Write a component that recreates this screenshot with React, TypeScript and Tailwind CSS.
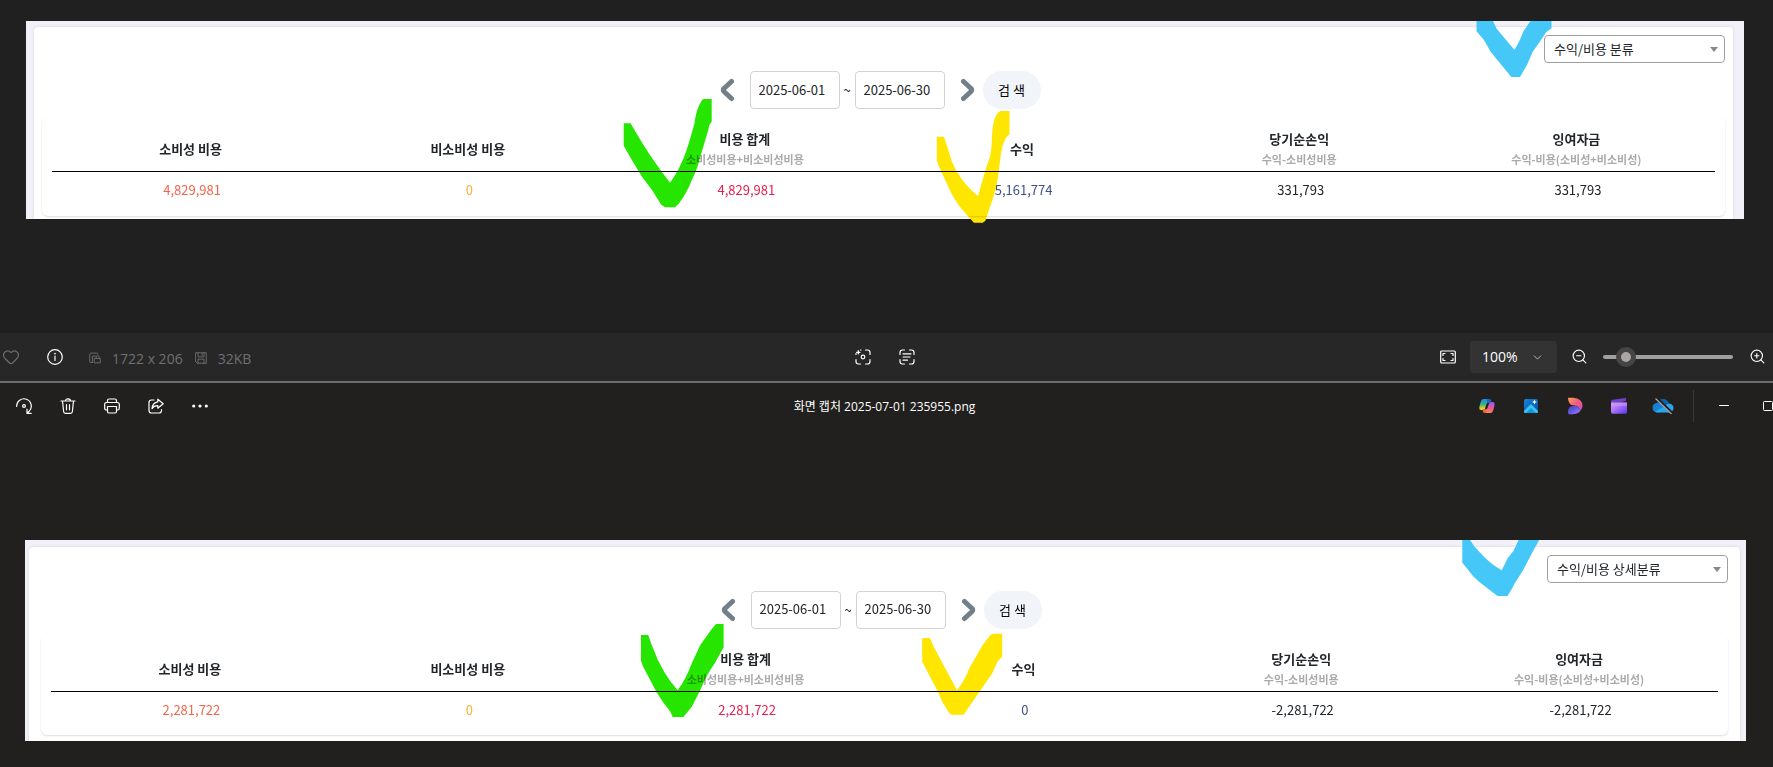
import type { ReactNode } from "react";
import { ChevronDown, Heart, ZoomIn, ZoomOut } from "lucide-react";

type Mark = { className: string; viewBox: string; color: string; d: string };

type Column = { title: string; note?: string; value: string; tone: string };

type Report = {
  id: string;
  category: string;
  panel: string;
  card: string;
  columns: Column[];
  marks: Mark[];
};

const makeColumns = (values: string[]): Column[] => [
  { title: "소비성 비용", value: values[0], tone: "text-[#f1654c]" },
  { title: "비소비성 비용", value: values[1], tone: "text-[#fbb03b]" },
  { title: "비용 합계", note: "소비성비용+비소비성비용", value: values[2], tone: "text-[#e8204e]" },
  { title: "수익", value: values[3], tone: "text-[#3f5185]" },
  { title: "당기순손익", note: "수익-소비성비용", value: values[4], tone: "text-[#212529]" },
  { title: "잉여자금", note: "수익-비용(소비성+비소비성)", value: values[5], tone: "text-[#212529]" },
];

const GREEN = "#26e600";
const YELLOW = "#ffe600";
const BLUE = "#45c8f7";

const first: Report = {
  id: "summary",
  category: "수익/비용 분류",
  panel: "ml-[26px] mr-[29px] pl-2 pr-[11px] pt-[6px] pb-0",
  card: "px-2 pb-[3px]",
  columns: makeColumns(["4,829,981", "0", "4,829,981", "5,161,774", "331,793", "331,793"]),
  marks: [
    {
      className: "absolute z-20 mix-blend-multiply left-[calc(50%-262px)] top-[77px] w-[90px] h-[111px]",
      viewBox: "623 98 90 111",
      color: GREEN,
      d: "M623.7 123.3H630.6L636.4 133.3Q650 157 670 182.7Q680 169 686 151.7Q690 140 694.5 123.3C696 113 698 107 700.3 103.3Q702 99 704 99H711.7V121.7Q709 124 708.3 130L700.3 156.7Q697 170 691.8 180Q687 193 678.5 204L675 207.3H665L661.2 204.7Q653 190 642 176.7L633 162L623.7 145.7Z",
    },
    {
      className: "absolute z-0 left-[calc(50%+51px)] top-[89px] w-[75px] h-[114px]",
      viewBox: "936 110 75 114",
      color: YELLOW,
      d: "M936.8 136.7H944L948.3 150Q951 161 955.9 170Q965 186 978.1 196Q982 182 986.5 166.7Q991 156 991.5 146.7C992 138 992 130 993.4 123.3Q995 116 998 112.7L1000 111H1009.5V134L1005.7 138.3Q1002 145 1001 153.3L998 176.7Q996 190 992.3 200L985.4 220.7L982.7 222.7H973.9L963.6 211.3Q954 200 948.3 186.7L940.6 170Q938 165 936.8 160Z",
    },
    {
      className: "absolute z-0 right-[192px] top-0 w-[76px] h-[56px]",
      viewBox: "1476 21 76 56",
      color: BLUE,
      d: "M1476.5 21H1493L1496.4 28.3Q1505 39 1514.4 49.7Q1519 43 1523.2 31.7L1530.4 21H1551.5V28.3L1546.1 32.3Q1540 42 1532.7 51.7L1527 65L1520 77H1511.3L1490.6 51.7L1484 40L1476.5 31.3Z",
    },
  ],
};

const second: Report = {
  id: "detail",
  category: "수익/비용 상세분류",
  panel: "ml-[25px] mr-[27px] pl-1 pr-[6px] pt-[7px] pb-0",
  card: "px-3 pb-[6px]",
  columns: makeColumns(["2,281,722", "0", "2,281,722", "0", "-2,281,722", "-2,281,722"]),
  marks: [
    {
      className: "absolute z-20 mix-blend-multiply left-[calc(50%-245px)] top-[83px] w-[83px] h-[95px]",
      viewBox: "641 623 83 95",
      color: GREEN,
      d: "M641 635H648.2L651.7 645Q657 660 665 673.3Q671 683 677.7 690.3Q686 679 691.8 663.3L700.3 645L711 630L716 624H723.6V647.3L714.8 663.3Q707 674 700.3 690L691.8 706.7L683.4 717H672.7L670.4 711.7Q663 703 656.3 691.7L643.2 666.7L641 661Z",
    },
    {
      className: "absolute z-0 left-[calc(50%+36px)] top-[93px] w-[81px] h-[83px]",
      viewBox: "922 633 81 83",
      color: YELLOW,
      d: "M922.2 638H929.9L933.7 646.7L957 690.3Q965 680 969.3 668.3L982.7 645L990.4 635L993.4 633.7H1002.2V656.7L998 660.7L992.3 673.3L963.6 714.7H951.3L948.3 711.7Q942 703 937.9 691.7L923.4 664L922.2 661.7Z",
    },
    {
      className: "absolute z-0 right-[206px] top-0 w-[78px] h-[57px]",
      viewBox: "1462 540 78 57",
      color: BLUE,
      d: "M1462.3 540H1470Q1474 547 1479.2 551.7Q1489 563 1501.7 570.3L1507.9 557.7L1513.6 550.7L1518.6 540H1539.2L1532.7 551.7L1523.2 570L1514.8 583.3Q1511 591 1507.5 596H1497.5L1479 581.7Q1472 576 1467.7 569.3L1462.3 562.7Z",
    },
  ],
};

function Arrow({ flip, label }: { flip?: boolean; label: string }) {
  return (
    <button type="button" aria-label={label} className="flex h-[38px] w-[14px] items-center">
      <svg viewBox="0 0 14 24" className="h-6 w-[14px]" fill="none" stroke="#737f88" strokeWidth="5" strokeLinecap="round" strokeLinejoin="round">
        <path d={flip ? "M2.5 3.5L9.5 10Q12 12 9.5 14L2.5 20.5" : "M11.5 3.5L4.5 10Q2 12 4.5 14L11.5 20.5"} />
      </svg>
    </button>
  );
}

function DateBox({ label, value }: { label: string; value: string }) {
  return (
    <input
      type="text"
      aria-label={label}
      defaultValue={value}
      className="h-[38px] w-[90px] rounded border border-[#ced4da] bg-white px-2 pb-[2px] text-[13px] text-[#212529]"
    />
  );
}

function ReportPanel({ report }: { report: Report }) {
  return (
    <section
      className={`relative isolate bg-[#f2f1f9] font-['Noto_Sans_CJK_KR',sans-serif] text-[13px] text-[#212529] ${report.panel}`}
    >
      <div className={`rounded-t bg-white pt-2 shadow-[0_0_3px_rgba(0,0,0,0.12)] ${report.card}`}>
        <div className="flex justify-end">
          <div className="relative z-10 w-[181px]">
            <select
              aria-label="분류"
              className="block h-7 w-full appearance-none rounded border border-[#a0a0a0] bg-transparent pl-[9px] pr-6"
            >
              <option>{report.category}</option>
            </select>
            <svg viewBox="0 0 8 5" className="pointer-events-none absolute right-[7px] top-3 h-[5px] w-2" fill="#888">
              <path d="M0 0H8L4 5Z" />
            </svg>
          </div>
        </div>
        <form className="mt-2 flex items-center justify-center" onSubmit={(e) => e.preventDefault()}>
          <Arrow label="이전 달" />
          <span className="w-4" />
          <DateBox label="시작일" value="2025-06-01" />
          <span className="w-[15px] text-center">~</span>
          <DateBox label="종료일" value="2025-06-30" />
          <span className="w-4" />
          <Arrow flip label="다음 달" />
          <button type="submit" className="ml-2 mr-[7px] h-[38px] w-[58px] rounded-full bg-[#f1f5f9] text-black">
            검 색
          </button>
        </form>
        <div className="relative z-10 mt-[7px] rounded-md px-[10px] pt-[13px] pb-[6px] shadow-[0_1px_2px_rgba(0,0,0,0.14)]">
          <table className="w-full table-fixed border-collapse text-center">
            <thead>
              <tr className="h-[42px] border-b border-black">
                {report.columns.map((c) => (
                  <th key={c.title} scope="col" className="px-0 pt-0 pb-[2px] align-middle leading-5 font-bold">
                    {c.title}
                    {c.note && <span className="block text-[11px] leading-5 text-[#aaa]">{c.note}</span>}
                  </th>
                ))}
              </tr>
            </thead>
            <tbody>
              <tr className="h-[38px]">
                {report.columns.map((c) => (
                  <td key={c.title} className={`pt-0 pb-[2px] pl-[3px] pr-0 ${c.tone}`}>
                    {c.value}
                  </td>
                ))}
              </tr>
            </tbody>
          </table>
        </div>
      </div>
      {report.marks.map((m) => (
        <svg key={m.viewBox} viewBox={m.viewBox} className={`pointer-events-none ${m.className}`} fill={m.color}>
          <path d={m.d} />
        </svg>
      ))}
    </section>
  );
}

function Tool({ label, children }: { label: string; children: ReactNode }) {
  return (
    <button type="button" aria-label={label} className="flex h-10 w-11 shrink-0 items-center justify-center">
      {children}
    </button>
  );
}

function Line({ children, className = "h-4 w-4" }: { children: ReactNode; className?: string }) {
  return (
    <svg viewBox="0 0 16 16" className={className} fill="none" stroke="currentColor" strokeWidth="1.2" strokeLinecap="round" strokeLinejoin="round">
      {children}
    </svg>
  );
}

function StatusBar() {
  return (
    <footer className="grid h-[50px] grid-cols-[1fr_auto_1fr] items-center border-b-2 border-[#6d6d6e] bg-[#272727] font-['Open_Sans',sans-serif] text-sm text-white">
      <div className="-ml-[11px] flex items-center text-[#707070]">
        <Tool label="즐겨찾기">
          <Heart size={18} strokeWidth={1.5} />
        </Tool>
        <span className="text-white">
          <Tool label="정보">
            <Line>
              <circle cx="8" cy="8" r="7.3" />
              <path d="M8 7V11.5" />
              <path d="M8 4.6V4.7" strokeWidth="1.6" />
            </Line>
          </Tool>
        </span>
        <Line className="ml-3 mt-[2px] h-3 w-3">
          <path d="M4.500 14H2.500Q1 14 1 12.500V3Q1 1.500 2.500 1.500H10.500Q12 1.500 12 3M4.500 14V5.500H8.500M7.500 8.500H15V14.500H7.500ZM9.500 8.500V6.500Q9.500 5 11.500 5T13.500 6.500V8.500" />
        </Line>
        <span className="ml-[11px] mt-1">1722 x 206</span>
        <Line className="ml-3 mt-[2px] h-3 w-3">
          <path d="M1 1H15V15H3L1 13ZM4 1V6.500H12V1M9.500 2V4.500M4 15V9.500H12V15" />
        </Line>
        <span className="ml-[11px] mt-1">32KB</span>
      </div>
      <div className="mr-1 flex items-center">
        <Tool label="시각적 검색">
          <Line>
            <path d="M1 5.500V4.500M5.500 1H6M10.500 1H12.500Q15 1 15 3.500V5.500M15 10.500V12.500Q15 15 12.500 15H10.500M5.500 15H3.500Q1 15 1 12.500V10.500M3.300 1.600V5M1.600 3.300H5" />
            <circle cx="8" cy="8" r="1.800" />
          </Line>
        </Tool>
        <Tool label="텍스트 스캔">
          <Line>
            <path d="M1 5.500V3.500Q1 1 3.500 1H5.500M10.500 1H12.500Q15 1 15 3.500V5.500M15 10.500V12.500Q15 15 12.500 15H10.500M5.500 15H3.500Q1 15 1 12.500V10.500M4 4.800H12M4 8H11M4 11.200H8.500" />
          </Line>
        </Tool>
      </div>
      <div className="-mr-[6px] flex items-center justify-end">
        <Tool label="창에 맞춤">
          <Line>
            <rect x="0.700" y="2" width="14.600" height="12" rx="1" />
            <path d="M3 6.500V4.500H5M11 4.500H13V6.500M13 9.500V11.500H11M5 11.500H3V9.500" />
          </Line>
        </Tool>
        <div className="relative w-[87px]">
          <select aria-label="확대 비율" className="block h-8 w-full appearance-none rounded bg-[#333] pl-3 text-sm">
            <option>100%</option>
          </select>
          <ChevronDown size={13} strokeWidth={1.6} className="pointer-events-none absolute right-[13px] top-[10px] text-[#c8c8c8]" />
        </div>
        <Tool label="축소">
          <ZoomOut size={17} strokeWidth={1.6} />
        </Tool>
        <input
          type="range"
          aria-label="확대/축소"
          min={0}
          max={100}
          defaultValue={12}
          className="mx-[2px] h-1 w-[130px] appearance-none rounded-full bg-[#a19f9d] [&::-webkit-slider-thumb]:h-5 [&::-webkit-slider-thumb]:w-5 [&::-webkit-slider-thumb]:appearance-none [&::-webkit-slider-thumb]:rounded-full [&::-webkit-slider-thumb]:border-5 [&::-webkit-slider-thumb]:border-solid [&::-webkit-slider-thumb]:border-[#454545] [&::-webkit-slider-thumb]:bg-[#aaa6a2]"
        />
        <Tool label="확대">
          <ZoomIn size={17} strokeWidth={1.6} />
        </Tool>
      </div>
    </footer>
  );
}

function AppIcons() {
  return (
    <>
      <Tool label="Copilot">
        <svg viewBox="0 0 16 16" className="h-4 w-4">
          <defs>
            <linearGradient id="cpL" x1="0" y1="0" x2="0" y2="1">
              <stop offset="0" stopColor="#1b8bea" />
              <stop offset="0.500" stopColor="#35b77c" />
              <stop offset="0.850" stopColor="#e8d020" />
            </linearGradient>
            <linearGradient id="cpR" x1="0.600" y1="0" x2="0.200" y2="1">
              <stop offset="0" stopColor="#a455e8" />
              <stop offset="0.500" stopColor="#ee5a8d" />
              <stop offset="1" stopColor="#ff9a3c" />
            </linearGradient>
          </defs>
          <path d="M4.500 1H10Q11.500 1 12 3L12.500 4.500H9.500Q8 4.500 7.500 6L6 10.500Q5.500 12 4 12H2Q0 12 .3 9.500Q1 6 2 3Q2.700 1 4.500 1Z" fill="url(#cpL)" />
          <path d="M11.500 15H6Q4.500 15 4 13L3.500 11.500H6.500Q8 11.500 8.500 10L10 5.500Q10.500 4 12 4H14Q16 4 15.700 6.500Q15 10 14 13Q13.300 15 11.500 15Z" fill="url(#cpR)" />
          <path d="M8 1H10Q11.500 1 12 3L12.500 4.500H9.500Q8.500 4.500 8 5.500Z" fill="#1b5fd0" />
          <path d="M3.500 11.500H6.500Q7.500 11.500 8 10.500L7.500 15H6Q4.500 15 4 13Z" fill="#f4633a" />
        </svg>
      </Tool>
      <Tool label="편집">
        <svg viewBox="0 0 16 16" className="h-4 w-4">
          <defs>
            <linearGradient id="ph" x1="0" y1="0" x2="1" y2="1">
              <stop offset="0" stopColor="#1683d8" />
              <stop offset="1" stopColor="#0b4f9e" />
            </linearGradient>
          </defs>
          <rect x="1" y="1" width="14" height="14" rx="1.500" fill="url(#ph)" />
          <path d="M1 13L7.200 6.800Q8 6 8.800 6.800L15 13V13.500Q15 15 13.500 15H2.500Q1 15 1 13.500Z" fill="#38c5f2" />
          <path d="M3 15L8 10L13 15Z" fill="#1593df" />
          <path d="M11.500 1.500L12.200 3.300L14 4L12.200 4.700L11.500 6.500L10.800 4.700L9 4L10.800 3.300Z" fill="#fff" />
        </svg>
      </Tool>
      <Tool label="디자이너">
        <svg viewBox="0 0 16 18" className="h-[18px] w-4">
          <defs>
            <linearGradient id="dsA" x1="0" y1="0" x2="1" y2="0.800">
              <stop offset="0" stopColor="#ffa353" />
              <stop offset="0.500" stopColor="#f3627a" />
              <stop offset="1" stopColor="#d84bb5" />
            </linearGradient>
            <linearGradient id="dsB" x1="0" y1="0" x2="1" y2="1">
              <stop offset="0" stopColor="#4b3bb5" />
              <stop offset="0.600" stopColor="#6c62ef" />
              <stop offset="1" stopColor="#b58cf5" />
            </linearGradient>
          </defs>
          <path d="M1 .8H6Q15.500 1.500 15.500 9Q15.500 11.500 13.500 13.500Q12 9 7.500 8.500Q4 8.300 3 7Q1 4.500 1 .8Z" fill="url(#dsA)" />
          <path d="M1 15Q1 9 6.500 8.800Q12 9 13.500 13.500Q11 17.300 5 17.300H2.500Q1 17.300 1 15Z" fill="url(#dsB)" />
        </svg>
      </Tool>
      <Tool label="Clipchamp">
        <svg viewBox="0 0 16 16" className="h-4 w-4">
          <defs>
            <linearGradient id="cc" x1="0" y1="0" x2="1" y2="1">
              <stop offset="0" stopColor="#e3a4ff" />
              <stop offset="0.500" stopColor="#a36bf5" />
              <stop offset="1" stopColor="#5938ee" />
            </linearGradient>
          </defs>
          <path d="M0 4V3.500Q0 2 1.500 1.800L15 0V3L8 4.500Z" fill="#6d44c9" />
          <path d="M0 4.500H16V14Q16 15.700 14.500 15.700H1.500Q0 15.700 0 14Z" fill="url(#cc)" />
          <path d="M0 4.500H16V8H0Z" fill="#c993ff" opacity="0.600" />
        </svg>
      </Tool>
      <Tool label="OneDrive">
        <svg viewBox="0 0 22 16" className="h-4 w-[22px]">
          <path d="M5 5Q7 1 11 1Q15.500 1 17 5.500L11 10L4 6Z" fill="#0d62ae" />
          <path d="M5 5Q8.500 4.500 11 7L17 13L5 14.500Q.5 14 .5 9.800T5 5Z" fill="#1583d2" />
          <path d="M3 13.500L13 8Q15 5.500 17 5.500Q21.500 6 21.500 10Q21 14.500 17 14.500H5.500Q4 14.500 3 13.500Z" fill="#28a5ee" />
          <path d="M4.500 0L21 16" stroke="#21201e" strokeWidth="3" />
          <path d="M3.500 .5L19.500 16" stroke="#aaa" strokeWidth="1.200" />
        </svg>
      </Tool>
    </>
  );
}

function TitleBar() {
  return (
    <header className="grid h-[47px] grid-cols-[1fr_auto_1fr] items-center text-white">
      <div className="ml-[2px] flex items-center">
        <Tool label="회전">
          <Line>
            <path d="M.7 8.500A7.300 7.300 0 1 1 13.200 13.200L11 15.300M11 11.200V15.400H15.200" />
            <circle cx="8" cy="8" r="1.400" />
          </Line>
        </Tool>
        <Tool label="삭제">
          <Line>
            <path d="M1 3H15M5.500 3Q5.500 .8 8 .8T10.500 3M2.500 3L3.600 13.500Q3.800 15.300 5.500 15.300H10.500Q12.200 15.300 12.400 13.500L13.500 3M6.500 6.500V11.800M9.500 6.500V11.800" />
          </Line>
        </Tool>
        <Tool label="인쇄">
          <Line>
            <path d="M3.500 4.500V2.500Q3.500 1 5 1H11Q12.500 1 12.500 2.500V4.500M3.500 12H2.500Q.7 12 .7 10.200V6.500Q.7 4.500 2.700 4.500H13.300Q15.300 4.500 15.300 6.500V10.200Q15.300 12 13.500 12H12.500M3.500 8.500H12.500V13.500Q12.500 15 11 15H5Q3.500 15 3.500 13.500Z" />
          </Line>
        </Tool>
        <Tool label="공유">
          <Line>
            <path d="M6 2H3.500Q1 2 1 4.500V12.500Q1 15 3.500 15H11Q13.500 15 13.500 12.500V11.500M9.800 1.200L15.200 5.700L9.800 10.200V7.700Q6 7.500 4 10.700Q4.500 4.500 9.800 3.800Z" />
          </Line>
        </Tool>
        <Tool label="더 보기">
          <svg viewBox="0 0 16 4" className="h-1 w-4" fill="currentColor">
            <circle cx="1.700" cy="2" r="1.600" />
            <circle cx="8" cy="2" r="1.600" />
            <circle cx="14.300" cy="2" r="1.600" />
          </svg>
        </Tool>
      </div>
      <h1 className="mr-1 pt-[2px] font-['Open_Sans','Noto_Sans_CJK_KR',sans-serif] text-xs">화면 캡처 2025-07-01 235955.png</h1>
      <div className="-mr-[17px] flex items-center justify-end">
        <AppIcons />
        <span className="ml-2 mr-2 h-8 w-px bg-[#3a3938]" />
        <Tool label="최소화">
          <svg viewBox="0 0 10 10" className="h-[10px] w-[10px]">
            <path d="M0 4.500H10" stroke="white" />
          </svg>
        </Tool>
        <Tool label="최대화">
          <svg viewBox="0 0 10 10" className="h-[10px] w-[10px]" fill="none" stroke="white">
            <rect x="0.500" y="0.500" width="9" height="9" rx="1" />
          </svg>
        </Tool>
      </div>
    </header>
  );
}

export default function App() {
  return (
    <main className="min-h-screen overflow-hidden bg-[#21201e]">
      <div className="bg-[#202020] pt-[21px] pb-[114px]">
        <ReportPanel report={first} />
      </div>
      <StatusBar />
      <TitleBar />
      <div className="pt-[110px] pb-[25px]">
        <ReportPanel report={second} />
      </div>
    </main>
  );
}
